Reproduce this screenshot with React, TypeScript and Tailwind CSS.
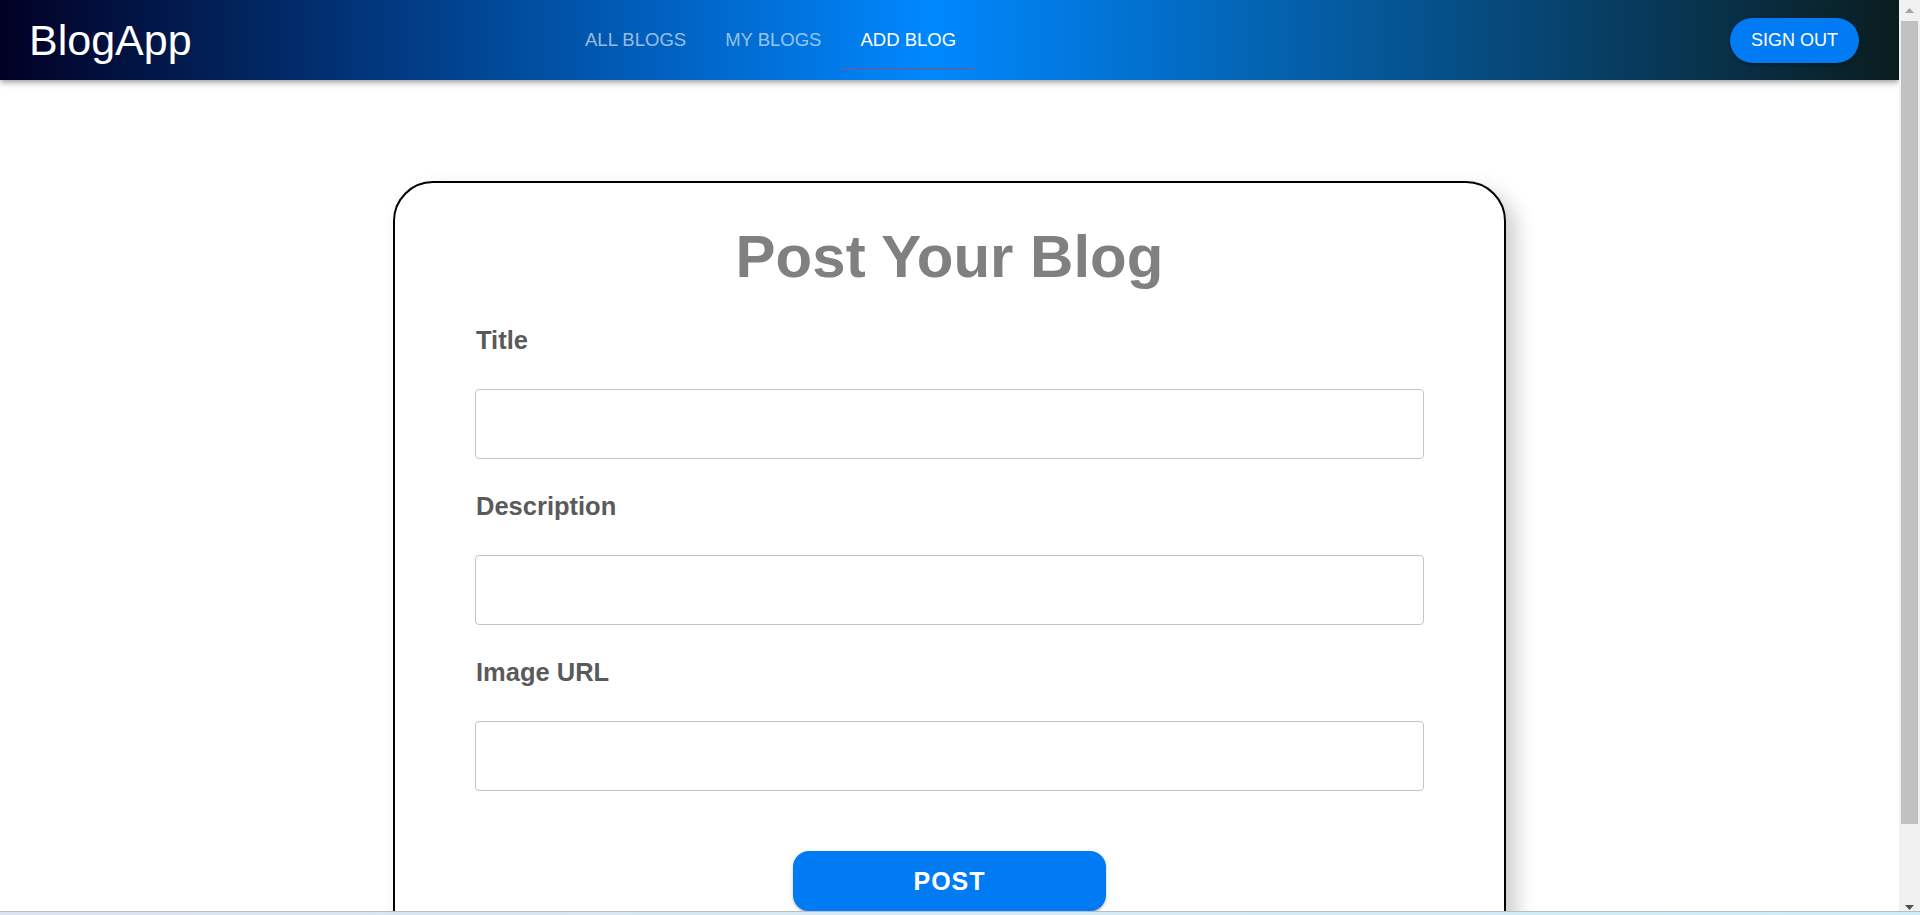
import * as React from 'react'

const tabs = [
  { label: 'ALL BLOGS', active: false },
  { label: 'MY BLOGS', active: false },
  { label: 'ADD BLOG', active: true },
]

const fields = ['Title', 'Description', 'Image URL']

function Header() {
  return (
    <header className="relative z-10 flex h-[80px] shrink-0 items-center bg-[linear-gradient(90deg,#020024_0%,#0088ff_49%,#0a1d1f_100%)] shadow-[0_2px_4px_-1px_rgba(0,0,0,0.2),0_4px_5px_0_rgba(0,0,0,0.14),0_1px_10px_0_rgba(0,0,0,0.12)]">
      <div className="w-[565px] shrink-0 pl-[29px] text-[43px] text-white">BlogApp</div>
      <nav className="flex self-start pl-[0.5px]">
        {tabs.map((tab) => (
          <div
            key={tab.label}
            className={
              tab.active
                ? 'relative h-[70px] px-[19.5px] pt-[29px] text-[18.5px] text-white'
                : 'relative h-[70px] px-[19.5px] pt-[29px] text-[18.5px] text-white/60'
            }
          >
            {tab.label}
            {tab.active && <span className="absolute bottom-0 left-0 right-0 h-[2px] bg-[#3f6cb4]" />}
          </div>
        ))}
      </nav>
      <button className="ml-auto mr-[40px] h-[45px] rounded-full bg-[#017bf3] px-[21px] text-[18px] text-white shadow-[0_3px_1px_-2px_rgba(0,0,0,0.2),0_2px_2px_0_rgba(0,0,0,0.14),0_1px_5px_0_rgba(0,0,0,0.12)]">
        SIGN OUT
      </button>
    </header>
  )
}

function PostCard() {
  return (
    <form className="mx-auto flex w-[1113px] flex-col rounded-[40px] border-2 border-black bg-white px-[80px] pb-[40px] pt-[39px] shadow-[10px_10px_20px_#ccc]">
      <h1 className="text-center text-[60px] font-bold text-[#808080]">Post Your Blog</h1>
      {fields.map((f, i) => (
        <div key={f} className={i === 0 ? 'mt-[35px] flex flex-col' : 'mt-[33px] flex flex-col'}>
          <label className="pl-[1px] text-[25.5px] font-bold text-[#5a5a5a]">{f}</label>
          <input
            type="text"
            className="mt-[34px] h-[70px] w-full rounded-[4px] border border-[#c4c4c4] bg-white px-[14px] text-[16px] outline-none"
          />
        </div>
      ))}
      <button
        type="button"
        className="mx-auto mt-[60px] h-[60px] w-[313px] rounded-[16px] bg-[#017bf3] text-[25px] font-bold tracking-[1px] text-white shadow-[0_3px_1px_-2px_rgba(0,0,0,0.2),0_2px_2px_0_rgba(0,0,0,0.14),0_1px_5px_0_rgba(0,0,0,0.12)]"
      >
        POST
      </button>
    </form>
  )
}

function Scrollbar() {
  return (
    <div className="flex w-[21px] shrink-0 flex-col items-center bg-[#f1f1f1]">
      <div className="flex h-[21px] items-center justify-center">
        <svg width="9" height="5" viewBox="0 0 9 5">
          <polygon points="0,5 4.5,0 9,5" fill="#a3a3a3" />
        </svg>
      </div>
      <div className="h-[803px] w-[17px] bg-[#c1c1c1]" />
      <div className="flex flex-1 items-end justify-center pb-[1px]">
        <svg width="9" height="5" viewBox="0 0 9 5">
          <polygon points="0,0 9,0 4.5,5" fill="#505050" />
        </svg>
      </div>
    </div>
  )
}

export default function App() {
  return (
    <div className="flex h-[915px] w-[1920px] flex-col overflow-hidden bg-white font-['Liberation_Sans',Arial,sans-serif] leading-[normal]">
      <div className="flex h-[911px] overflow-hidden">
        <div className="flex min-w-0 flex-1 flex-col overflow-hidden">
          <Header />
          <main className="pt-[101px]">
            <PostCard />
          </main>
        </div>
        <Scrollbar />
      </div>
      <div className="h-[4px] shrink-0 border-t border-[#b8bcc4] bg-linear-to-r from-[#dde4f0] to-[#cdeef7]" />
    </div>
  )
}
